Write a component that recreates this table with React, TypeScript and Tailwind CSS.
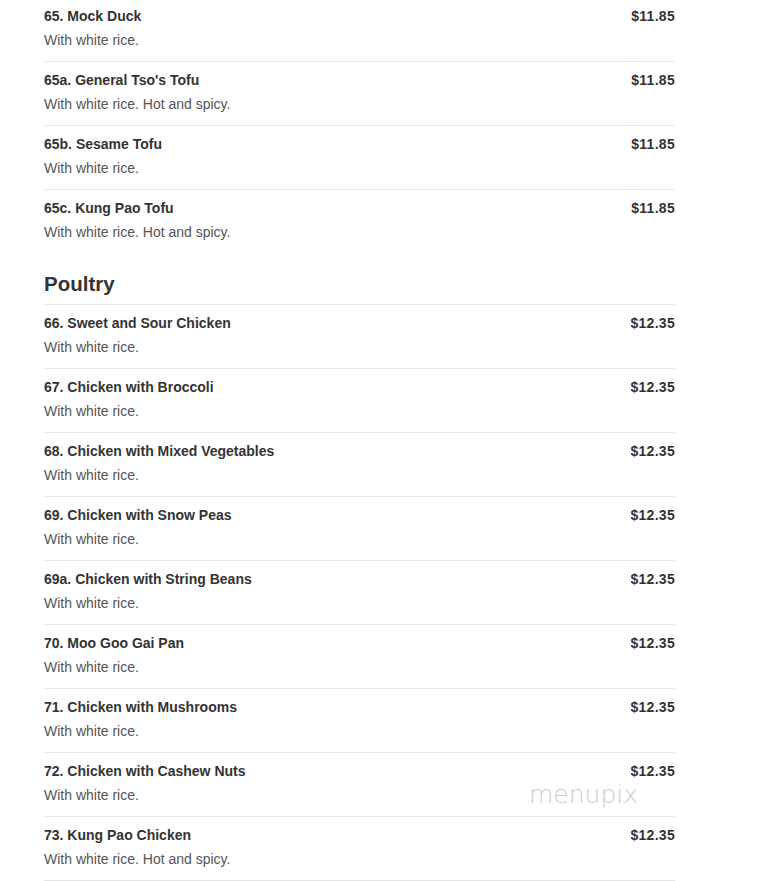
const tofu = [
  { name: '65. Mock Duck', desc: 'With white rice.', price: '$11.85' },
  { name: "65a. General Tso's Tofu", desc: 'With white rice. Hot and spicy.', price: '$11.85' },
  { name: '65b. Sesame Tofu', desc: 'With white rice.', price: '$11.85' },
  { name: '65c. Kung Pao Tofu', desc: 'With white rice. Hot and spicy.', price: '$11.85' },
];

const poultry = [
  { name: '66. Sweet and Sour Chicken', desc: 'With white rice.', price: '$12.35' },
  { name: '67. Chicken with Broccoli', desc: 'With white rice.', price: '$12.35' },
  { name: '68. Chicken with Mixed Vegetables', desc: 'With white rice.', price: '$12.35' },
  { name: '69. Chicken with Snow Peas', desc: 'With white rice.', price: '$12.35' },
  { name: '69a. Chicken with String Beans', desc: 'With white rice.', price: '$12.35' },
  { name: '70. Moo Goo Gai Pan', desc: 'With white rice.', price: '$12.35' },
  { name: '71. Chicken with Mushrooms', desc: 'With white rice.', price: '$12.35' },
  { name: '72. Chicken with Cashew Nuts', desc: 'With white rice.', price: '$12.35' },
  { name: '73. Kung Pao Chicken', desc: 'With white rice. Hot and spicy.', price: '$12.35' },
];

type Item = { name: string; desc: string; price: string };

const MenuItem = ({ item }: { item: Item }) => {
  return (
    <div className="border-t border-[#e6e6e6] pt-[8px] pb-[11px]">
      <div className="flex justify-between text-[14px] leading-[20px] font-bold text-[#333]">
        <span>{item.name}</span>
        <span className="tracking-[0.3px]">{item.price}</span>
      </div>
      <p className="mt-[4px] text-[14px] leading-[20px] text-[#555]">{item.desc}</p>
    </div>
  );
};

export default function App() {
  return (
    <div
      className="relative h-[881px] overflow-hidden bg-white"
      style={{ fontFamily: '"Liberation Sans", Arial, sans-serif' }}
    >
      <div className="ml-[44px] w-[631px] -mt-[3px]">
        {tofu.map((item) => (
          <MenuItem key={item.name} item={item} />
        ))}

        <h2 className="mt-[17px] pb-[6px] text-[20.5px] leading-[28px] font-bold text-[#333]">
          Poultry
        </h2>

        {poultry.map((item) => (
          <MenuItem key={item.name} item={item} />
        ))}
        <div className="border-t border-[#e6e6e6]" />
      </div>

      {/* watermark */}
      <div
        className="absolute left-[529px] top-[782px] text-[25px] leading-none font-extralight text-[#cdcdcd]"
        style={{ fontFamily: '"DejaVu Sans", sans-serif' }}
      >
        menupix
      </div>
    </div>
  );
}
